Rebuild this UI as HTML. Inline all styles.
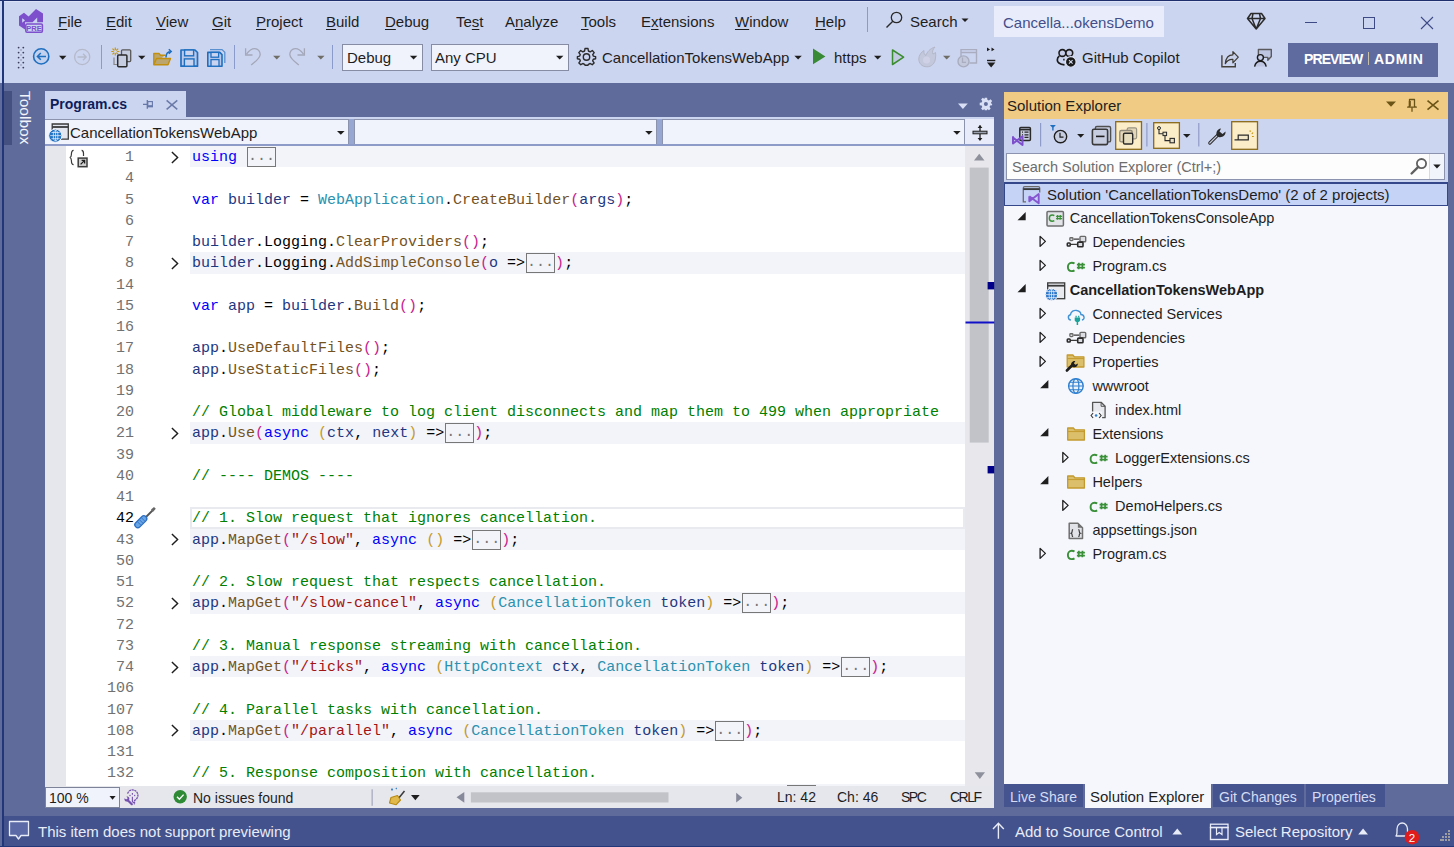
<!DOCTYPE html>
<html><head><meta charset="utf-8">
<style>
*{margin:0;padding:0;box-sizing:border-box}
html,body{width:1454px;height:847px;overflow:hidden;background:#5f6b9b}
body{position:relative;font-family:"Liberation Sans",sans-serif;color:#1e1e1e}
.a{position:absolute}
.t{position:absolute;white-space:pre;line-height:1;font-size:15px}
svg{position:absolute;overflow:visible}
.ul{text-decoration:underline;text-underline-offset:2px;text-decoration-thickness:1px}
#code{position:absolute;left:66px;top:146px;width:899px;height:640px;background:#fff;overflow:hidden}
.row{position:absolute;left:0;width:899px;height:21.25px}
.hl{position:absolute;left:124px;right:0;top:0;bottom:0;background:#f3f4f9}
.cur{position:absolute;left:124px;right:0;top:0;height:21.5px;border:2px solid #e9e9f0}
.ln{position:absolute;left:0;top:1px;width:68px;text-align:right;font-family:"Liberation Mono",monospace;font-size:15px;line-height:21.25px;color:#717171}
.ln.cl{color:#000}
.cd{position:absolute;left:126px;top:1px;font-family:"Liberation Mono",monospace;font-size:15px;line-height:21.25px;white-space:pre;color:#000}
.k{color:#0000ff}.v{color:#1f377f}.ty{color:#2b91af}.f{color:#74531f}.s{color:#a31515}.c{color:#008000}.p1{color:#c8228d}.p2{color:#c49a2c}
.bx{display:inline-block;margin-left:1px;width:29px;height:20px;border:1.5px solid #777;vertical-align:top;margin-top:0;color:#777;line-height:18px;text-indent:0;overflow:hidden;background:#f3f4f9}
.chev{left:105px;top:4.5px}

</style></head><body>
<!-- window header area -->
<div class="a" style="left:0;top:0;width:1454px;height:83px;background:#ccd5f0"></div>
<div class="a" style="left:0;top:0;width:1454px;height:1px;background:#1f2f6e"></div>
<div class="a" style="left:4px;top:1px;width:1450px;height:1px;background:#dbe2f7"></div>
<div class="a" style="left:2px;top:0;width:2px;height:847px;background:#22367a"></div>
<div class="a" style="left:0;top:846px;width:1454px;height:1px;background:#22367a"></div>

<!-- logo -->
<svg style="left:0;top:0" width="60" height="40">
<path d="M19 16.2 L24 12.7 L28.6 16.4 L36 9 L43 13.4 L43 22.2 L37.2 22.2 L37.2 17.6 L32.6 22.2 L25 22.2 L25 29.6 L19 25.6 Z" fill="#7d4fcd"/>
<path d="M22.2 18.3 L25 20.3 L22.2 22.8 Z" fill="#ccd5f0"/>
<rect x="25.8" y="23.9" width="16.6" height="8.4" rx="1.2" fill="#ccd5f0" stroke="#7d4fcd" stroke-width="1.5"/>
<text x="34.1" y="30.8" font-family="Liberation Sans" font-weight="bold" font-size="7.6" text-anchor="middle" fill="#7d4fcd">PRE</text>
</svg>
<!-- menu -->
<div class="t" style="left:58px;top:14px"><span class="ul">F</span>ile</div>
<div class="t" style="left:106px;top:14px"><span class="ul">E</span>dit</div>
<div class="t" style="left:156px;top:14px"><span class="ul">V</span>iew</div>
<div class="t" style="left:212px;top:14px"><span class="ul">G</span>it</div>
<div class="t" style="left:256px;top:14px"><span class="ul">P</span>roject</div>
<div class="t" style="left:326px;top:14px"><span class="ul">B</span>uild</div>
<div class="t" style="left:385px;top:14px"><span class="ul">D</span>ebug</div>
<div class="t" style="left:456px;top:14px">Te<span class="ul">s</span>t</div>
<div class="t" style="left:505px;top:14px">A<span class="ul">n</span>alyze</div>
<div class="t" style="left:581px;top:14px"><span class="ul">T</span>ools</div>
<div class="t" style="left:641px;top:14px">E<span class="ul">x</span>tensions</div>
<div class="t" style="left:735px;top:14px"><span class="ul">W</span>indow</div>
<div class="t" style="left:815px;top:14px"><span class="ul">H</span>elp</div>
<div class="a" style="left:867px;top:7px;width:1px;height:25px;background:#8e9ac4"></div>
<svg style="left:880px;top:8px" width="30" height="26"><circle cx="16.5" cy="9.5" r="5.2" fill="none" stroke="#2b2b2b" stroke-width="1.3"/><path d="M12.8 13.2 L6.5 19.5" stroke="#2b2b2b" stroke-width="1.4"/></svg>
<div class="t" style="left:910px;top:14px">Search</div>
<svg style="left:960px;top:17px" width="10" height="6"><path d="M1.5 1.5 L8.5 1.5 L5 5 Z" fill="#1e1e1e"/></svg>
<!-- title box -->
<div class="a" style="left:994px;top:6px;width:170px;height:31px;background:#e9edfb"></div>
<div class="t" style="left:1003px;top:15px;color:#434f8b">Cancella...okensDemo</div>
<!-- diamond -->
<svg style="left:1240px;top:8px" width="30" height="26"><path d="M11 5.5 L21.5 5.5 L25 10.5 L16.2 21 L7.5 10.5 Z M7.5 10.5 L25 10.5 M13 5.5 L12 10.5 L16.2 21 L20.5 10.5 L19.5 5.5" fill="none" stroke="#2b2b2b" stroke-width="1.5" stroke-linejoin="round"/></svg>
<!-- window controls -->
<div class="a" style="left:1305px;top:22px;width:12px;height:1px;background:#3e4a86"></div>
<div class="a" style="left:1363px;top:17px;width:12px;height:12px;border:1px solid #3e4a86"></div>
<svg style="left:1420px;top:16px" width="14" height="14"><path d="M1 1 L13 13 M13 1 L1 13" stroke="#3e4a86" stroke-width="1.1"/></svg>

<!-- toolbar grip -->
<svg style="left:0;top:0" width="30" height="80">
<g fill="#3b3f5e"><circle cx="18.6" cy="47.6" r="0.9"/><circle cx="23.3" cy="47.6" r="0.9"/><circle cx="18.6" cy="52.6" r="0.9"/><circle cx="23.3" cy="52.6" r="0.9"/><circle cx="18.6" cy="57.6" r="0.9"/><circle cx="23.3" cy="57.6" r="0.9"/><circle cx="18.6" cy="62.6" r="0.9"/><circle cx="23.3" cy="62.6" r="0.9"/><circle cx="18.6" cy="67.6" r="0.9"/><circle cx="23.3" cy="67.6" r="0.9"/></g>
<g fill="#8a90a8"><circle cx="21" cy="50" r="0.8"/><circle cx="21" cy="55" r="0.8"/><circle cx="21" cy="60" r="0.8"/><circle cx="21" cy="65" r="0.8"/></g>
</svg>
<!-- back / fwd -->
<svg style="left:0;top:0" width="100" height="80">
<circle cx="41.2" cy="56.4" r="7.6" fill="#c3d1ee" stroke="#1f6fc0" stroke-width="1.6"/>
<path d="M46 56.4 L37.6 56.4 M40.8 53 L37.4 56.4 L40.8 59.8" fill="none" stroke="#1f6fc0" stroke-width="1.5"/>
<path d="M59 55.8 L66.4 55.8 L62.7 59.8 Z" fill="#1e1e1e"/>
<circle cx="82.2" cy="57" r="7.6" fill="none" stroke="#b5bacb" stroke-width="1.3"/>
<path d="M77.5 57 L86 57 M83 53.8 L86.2 57 L83 60.2" fill="none" stroke="#b5bacb" stroke-width="1.3"/>
</svg>
<div class="a" style="left:101px;top:45px;width:1px;height:24px;background:#8a9acb"></div>
<!-- new project -->
<svg style="left:0;top:0" width="240" height="80">
<g stroke="#c8960c" stroke-width="1.2"><path d="M115.3 47.5 L115.3 55.5 M111.3 51.5 L119.3 51.5 M112.5 48.7 L118.1 54.3 M118.1 48.7 L112.5 54.3"/></g>
<circle cx="115.3" cy="51.5" r="1.6" fill="#ccd5f0"/>
<rect x="121.5" y="49.8" width="9.2" height="11.8" rx="1" fill="#c7cde0" stroke="#585858" stroke-width="1.3"/>
<rect x="117.7" y="55" width="9.2" height="11.8" rx="1" fill="#c7cde0" stroke="#2a2a2a" stroke-width="1.5"/>
<path d="M114 57.5 L114 64.5 L117 64.5" fill="none" stroke="#888" stroke-width="1.2"/>
<path d="M138.1 55.8 L145.4 55.8 L141.75 59.6 Z" fill="#1e1e1e"/>
<!-- folder -->
<path d="M153.8 64.8 L153.8 53.5 L159 53.5 L160.5 55.2 L165 55.2 M153.8 64.8 L156.5 58.5 L170.5 58.5 L168 64.8 Z" fill="#bda66e" stroke="#c28f0e" stroke-width="1.4" stroke-linejoin="round"/>
<path d="M166 57.5 C166 53 167.5 51.5 171 51.5 M168.8 49.3 L171.2 51.5 L168.8 53.8" fill="none" stroke="#1f6fc0" stroke-width="1.5"/>
<!-- save -->
<path d="M181 50 L195 50 L197.5 52.5 L197.5 66.2 L181 66.2 Z" fill="#b8c8ea" stroke="#1f6fc0" stroke-width="1.7" stroke-linejoin="round"/>
<rect x="184.6" y="50" width="9" height="5.8" fill="#ccd5f0" stroke="#1f6fc0" stroke-width="1.4"/>
<rect x="184.4" y="58.9" width="9.6" height="7.3" fill="#c9d5f0" stroke="#1f6fc0" stroke-width="1.4"/>
<!-- save all -->
<path d="M210 49.6 L222 49.6 L224.8 52.3 L224.8 63" fill="none" stroke="#5a8fd0" stroke-width="1.3"/>
<path d="M207.8 52.4 L219.8 52.4 L222 54.6 L222 66.2 L207.8 66.2 Z" fill="#b8c8ea" stroke="#1f6fc0" stroke-width="1.6" stroke-linejoin="round"/>
<rect x="211" y="52.4" width="7.6" height="4.8" fill="#ccd5f0" stroke="#1f6fc0" stroke-width="1.3"/>
<rect x="211" y="59.6" width="8" height="6.6" fill="#c9d5f0" stroke="#1f6fc0" stroke-width="1.3"/>
</svg>
<div class="a" style="left:234px;top:45px;width:1px;height:24px;background:#8a9acb"></div>
<!-- undo redo -->
<svg style="left:0;top:0" width="340" height="80">
<path d="M245.6 48.2 L245.6 55 L252.5 55" fill="none" stroke="#a3a7b8" stroke-width="1.3"/>
<path d="M246.5 54.2 C249 50.5 251.5 48.6 254.8 48.6 C258 48.6 260.2 51.5 260.2 54.5 C260.2 57.5 258 59.8 251.2 65" fill="none" stroke="#a3a7b8" stroke-width="1.3"/>
<path d="M273.1 55.8 L280.4 55.8 L276.75 59.5 Z" fill="#6e6e66"/>
<path d="M304.4 48.2 L304.4 55 L297.5 55" fill="none" stroke="#a3a7b8" stroke-width="1.3"/>
<path d="M303.5 54.2 C301 50.5 298.5 48.6 295.2 48.6 C292 48.6 289.8 51.5 289.8 54.5 C289.8 57.5 292 59.8 298.8 65" fill="none" stroke="#a3a7b8" stroke-width="1.3"/>
<path d="M317.2 55.8 L324.5 55.8 L320.85 59.5 Z" fill="#6e6e66"/>
</svg>
<div class="a" style="left:332px;top:45px;width:1px;height:24px;background:#8a9acb"></div>
<!-- combos -->
<div class="a" style="left:342px;top:44px;width:81px;height:27px;background:#f0f3fc;border:1px solid #868ca4"></div>
<div class="t" style="left:347px;top:50px">Debug</div>
<div class="a" style="left:431px;top:44px;width:138px;height:27px;background:#f0f3fc;border:1px solid #868ca4"></div>
<div class="t" style="left:435px;top:50px">Any CPU</div>
<svg style="left:0;top:0" width="600" height="80"><path d="M409.9 55.8 L417.3 55.8 L413.6 59.6 Z" fill="#1e1e1e"/><path d="M556 55.8 L563.4 55.8 L559.7 59.6 Z" fill="#1e1e1e"/></svg>
<!-- gear -->
<svg style="left:577px;top:48px" width="19" height="18" viewBox="0 0 19 18">
<path d="M8 0.8 L11 0.8 L11.4 3.3 L13.2 4.2 L15.3 2.8 L17.2 4.9 L15.7 6.9 L16.3 8.4 L18.6 8.9 L18.6 11.1 L16.3 11.6 L15.7 13.1 L17.1 15.2 L15.2 17 L13.2 15.8 L11.4 16.7 L11 17.6 L8 17.6 L7.6 16.7 L5.8 15.8 L3.8 17 L1.9 15.2 L3.3 13.1 L2.7 11.6 L0.4 11.1 L0.4 8.9 L2.7 8.4 L3.3 6.9 L1.8 4.9 L3.7 2.8 L5.8 4.2 L7.6 3.3 Z" fill="none" stroke="#2a2a2a" stroke-width="1.4" stroke-linejoin="round" transform="translate(0,-0.3)"/>
<circle cx="9.5" cy="9" r="3.2" fill="none" stroke="#2a2a2a" stroke-width="1.4"/>
</svg>
<div class="t" style="left:602px;top:50px">CancellationTokensWebApp</div>
<svg style="left:0;top:0" width="1000" height="80">
<path d="M794.4 55.8 L801.8 55.8 L798.1 59.6 Z" fill="#1e1e1e"/>
<path d="M813 48.6 L825.4 56.4 L813 64.2 Z" fill="#388a34"/>
<path d="M874 55.8 L881.4 55.8 L877.7 59.6 Z" fill="#1e1e1e"/>
<path d="M892.5 50 L903.6 57.2 L892.5 64.5 Z" fill="#c3cbe3" stroke="#3a8d2e" stroke-width="1.5" stroke-linejoin="round"/>
<!-- flame -->
<path d="M927 66.8 C921.5 66.8 918.8 63 918.8 59 C918.8 55 921.5 52 924 50.5 C923.5 53 924.5 55 926 55.5 C927 52 930 48.5 935 47 C932.5 49.5 932 52 933 54 C934 53.5 935 53 935.5 52.5 C935.8 54 935.8 56 935.5 58 C935 63.5 931.5 66.8 927 66.8 Z" fill="#c4c8dc" stroke="#b3b7c8" stroke-width="1"/>
<circle cx="926.5" cy="60" r="3.5" fill="#cfd2e6"/>
<path d="M943 55.8 L950.4 55.8 L946.7 59.6 Z" fill="#6e6e66"/>
<!-- window/clock -->
<path d="M961 62 L961 49.6 L976.5 49.6 L976.5 63 L969.5 63 M961 52.5 L976.5 52.5" fill="none" stroke="#a9adbf" stroke-width="1.4"/>
<circle cx="963.5" cy="61.4" r="5.5" fill="#c4c9dc" stroke="#a9adbf" stroke-width="1.4"/>
<path d="M962.5 57.5 L962.5 62.3 L966 62.3" fill="none" stroke="#a9adbf" stroke-width="1.3"/>
<!-- overflow -->
<path d="M987 47.6 L990 49.4 L987 51.2 Z M991.5 47.6 L994.5 49.4 L991.5 51.2 Z" fill="#1e1e1e"/>
<rect x="987" y="59.8" width="8.3" height="1.4" fill="#1e1e1e"/>
<path d="M987 62.6 L995.3 62.6 L991.15 67.6 Z" fill="#1e1e1e"/>
</svg>
<div class="t" style="left:834px;top:50px">https</div>
<!-- copilot -->
<svg style="left:0;top:0" width="1100" height="80">
<circle cx="1062.4" cy="53" r="3.4" fill="#c6cee9" stroke="#1a1a1a" stroke-width="1.6"/>
<circle cx="1069.3" cy="53" r="3.4" fill="#c6cee9" stroke="#1a1a1a" stroke-width="1.6"/>
<path d="M1059.4 56 C1057.8 57 1057.3 58.5 1057.3 60 C1057.3 62.5 1060 64.2 1064.5 64.8" fill="none" stroke="#1a1a1a" stroke-width="1.7"/>
<path d="M1063.9 58.8 L1063.9 60.5" stroke="#1a1a1a" stroke-width="1.4"/>
<circle cx="1070.8" cy="61.9" r="5.3" fill="#1a1a1a" stroke="#dfe5f8" stroke-width="1.1"/>
<path d="M1069 60.1 L1072.6 63.7 M1072.6 60.1 L1069 63.7" stroke="#d8def2" stroke-width="1.1"/>
</svg>
<div class="t" style="left:1082px;top:50px">GitHub Copilot</div>
<!-- share & feedback -->
<svg style="left:0;top:0" width="1290" height="80">
<path d="M1221.9 55.2 L1221.9 66.8 L1235.3 66.8 L1235.3 63.1" fill="none" stroke="#45423a" stroke-width="1.4"/>
<path d="M1225.3 63.6 C1225.8 58 1228.5 54.8 1232.9 54.8 L1232.9 51.6 L1238.3 57.2 L1232.9 62.8 L1232.9 59.4 C1229.5 59.2 1227 60.5 1225.3 63.6 Z" fill="#c9d0ea" stroke="#3d3a33" stroke-width="1.2" stroke-linejoin="round"/>
<path d="M1258.4 57.8 L1258.4 49.5 L1271.3 49.5 L1271.3 56.5 L1267.8 60.3 L1267.8 57.4 L1263 57.4" fill="#bec5e0" stroke="#5a5a5e" stroke-width="1.4" stroke-linejoin="round"/>
<circle cx="1260.4" cy="57.6" r="3" fill="#c6cee9" stroke="#1a1a1a" stroke-width="1.4"/>
<path d="M1254.6 66.6 C1255.3 63 1257.5 61.3 1260.4 61.3 C1263.3 61.3 1265.5 63 1266.2 66.6 Z" fill="#bec5e0"/>
<path d="M1254.6 66.6 C1255.3 63 1257.5 61.3 1260.4 61.3 C1263.3 61.3 1265.5 63 1266.2 66.6" fill="none" stroke="#1a1a1a" stroke-width="1.4"/>
</svg>
<!-- preview admin -->
<div class="a" style="left:1288px;top:43px;width:150px;height:34px;background:#5f6b9f"></div>
<div class="t" style="left:1304px;top:52px;font-size:14px;font-weight:bold;color:#fff;letter-spacing:-0.9px">PREVIEW</div>
<div class="a" style="left:1368px;top:52px;width:1px;height:13px;background:#c8bfa8"></div>
<div class="t" style="left:1374px;top:52px;font-size:14px;font-weight:bold;color:#fff;letter-spacing:0.75px">ADMIN</div>

<!-- status bar -->
<div class="a" style="left:4px;top:816px;width:1450px;height:30px;background:#43528c"></div>

<!-- editor panel -->
<div class="a" style="left:45px;top:91px;width:141px;height:27px;background:#ccd5f0"></div>
<div class="a" style="left:45px;top:117px;width:949px;height:29px;background:#ccd5f0"></div>
<div class="a" style="left:45px;top:146px;width:21px;height:640px;background:#e6e7ec"></div>
<div id="code">
<div class="row" style="top:0.00px"><div class="hl"></div><div class="ln">1</div><svg class="chev" width="8" height="13" viewBox="0 0 8 13"><path d="M0.9 0.9 L6.6 6.5 L0.9 12.1" fill="none" stroke="#1e1e1e" stroke-width="1.45"/></svg><div class="cd"><span class="k">using</span> <span class="bx">...</span></div></div>
<div class="row" style="top:21.25px"><div class="ln">4</div><div class="cd"></div></div>
<div class="row" style="top:42.50px"><div class="ln">5</div><div class="cd"><span class="k">var</span> <span class="v">builder</span> = <span class="ty">WebApplication</span>.<span class="f">CreateBuilder</span><span class="p1">(</span><span class="v">args</span><span class="p1">)</span>;</div></div>
<div class="row" style="top:63.75px"><div class="ln">6</div><div class="cd"></div></div>
<div class="row" style="top:85.00px"><div class="ln">7</div><div class="cd"><span class="v">builder</span>.Logging.<span class="f">ClearProviders</span><span class="p1">()</span>;</div></div>
<div class="row" style="top:106.25px"><div class="hl"></div><div class="ln">8</div><svg class="chev" width="8" height="13" viewBox="0 0 8 13"><path d="M0.9 0.9 L6.6 6.5 L0.9 12.1" fill="none" stroke="#1e1e1e" stroke-width="1.45"/></svg><div class="cd"><span class="v">builder</span>.Logging.<span class="f">AddSimpleConsole</span><span class="p1">(</span><span class="v">o</span> =&gt;<span class="bx">...</span><span class="p1">)</span>;</div></div>
<div class="row" style="top:127.50px"><div class="ln">14</div><div class="cd"></div></div>
<div class="row" style="top:148.75px"><div class="ln">15</div><div class="cd"><span class="k">var</span> <span class="v">app</span> = <span class="v">builder</span>.<span class="f">Build</span><span class="p1">()</span>;</div></div>
<div class="row" style="top:170.00px"><div class="ln">16</div><div class="cd"></div></div>
<div class="row" style="top:191.25px"><div class="ln">17</div><div class="cd"><span class="v">app</span>.<span class="f">UseDefaultFiles</span><span class="p1">()</span>;</div></div>
<div class="row" style="top:212.50px"><div class="ln">18</div><div class="cd"><span class="v">app</span>.<span class="f">UseStaticFiles</span><span class="p1">()</span>;</div></div>
<div class="row" style="top:233.75px"><div class="ln">19</div><div class="cd"></div></div>
<div class="row" style="top:255.00px"><div class="ln">20</div><div class="cd"><span class="c">// Global middleware to log client disconnects and map them to 499 when appropriate</span></div></div>
<div class="row" style="top:276.25px"><div class="hl"></div><div class="ln">21</div><svg class="chev" width="8" height="13" viewBox="0 0 8 13"><path d="M0.9 0.9 L6.6 6.5 L0.9 12.1" fill="none" stroke="#1e1e1e" stroke-width="1.45"/></svg><div class="cd"><span class="v">app</span>.<span class="f">Use</span><span class="p1">(</span><span class="k">async</span> <span class="p2">(</span><span class="v">ctx</span>, <span class="v">next</span><span class="p2">)</span> =&gt;<span class="bx">...</span><span class="p1">)</span>;</div></div>
<div class="row" style="top:297.50px"><div class="ln">39</div><div class="cd"></div></div>
<div class="row" style="top:318.75px"><div class="ln">40</div><div class="cd"><span class="c">// ---- DEMOS ----</span></div></div>
<div class="row" style="top:340.00px"><div class="ln">41</div><div class="cd"></div></div>
<div class="row" style="top:361.25px"><div class="cur"></div><div class="ln cl">42</div><div class="cd"><span class="c">// 1. Slow request that ignores cancellation.</span></div></div>
<div class="row" style="top:382.50px"><div class="hl"></div><div class="ln">43</div><svg class="chev" width="8" height="13" viewBox="0 0 8 13"><path d="M0.9 0.9 L6.6 6.5 L0.9 12.1" fill="none" stroke="#1e1e1e" stroke-width="1.45"/></svg><div class="cd"><span class="v">app</span>.<span class="f">MapGet</span><span class="p1">(</span><span class="s">"/slow"</span>, <span class="k">async</span> <span class="p2">()</span> =&gt;<span class="bx">...</span><span class="p1">)</span>;</div></div>
<div class="row" style="top:403.75px"><div class="ln">50</div><div class="cd"></div></div>
<div class="row" style="top:425.00px"><div class="ln">51</div><div class="cd"><span class="c">// 2. Slow request that respects cancellation.</span></div></div>
<div class="row" style="top:446.25px"><div class="hl"></div><div class="ln">52</div><svg class="chev" width="8" height="13" viewBox="0 0 8 13"><path d="M0.9 0.9 L6.6 6.5 L0.9 12.1" fill="none" stroke="#1e1e1e" stroke-width="1.45"/></svg><div class="cd"><span class="v">app</span>.<span class="f">MapGet</span><span class="p1">(</span><span class="s">"/slow-cancel"</span>, <span class="k">async</span> <span class="p2">(</span><span class="ty">CancellationToken</span> <span class="v">token</span><span class="p2">)</span> =&gt;<span class="bx">...</span><span class="p1">)</span>;</div></div>
<div class="row" style="top:467.50px"><div class="ln">72</div><div class="cd"></div></div>
<div class="row" style="top:488.75px"><div class="ln">73</div><div class="cd"><span class="c">// 3. Manual response streaming with cancellation.</span></div></div>
<div class="row" style="top:510.00px"><div class="hl"></div><div class="ln">74</div><svg class="chev" width="8" height="13" viewBox="0 0 8 13"><path d="M0.9 0.9 L6.6 6.5 L0.9 12.1" fill="none" stroke="#1e1e1e" stroke-width="1.45"/></svg><div class="cd"><span class="v">app</span>.<span class="f">MapGet</span><span class="p1">(</span><span class="s">"/ticks"</span>, <span class="k">async</span> <span class="p2">(</span><span class="ty">HttpContext</span> <span class="v">ctx</span>, <span class="ty">CancellationToken</span> <span class="v">token</span><span class="p2">)</span> =&gt;<span class="bx">...</span><span class="p1">)</span>;</div></div>
<div class="row" style="top:531.25px"><div class="ln">106</div><div class="cd"></div></div>
<div class="row" style="top:552.50px"><div class="ln">107</div><div class="cd"><span class="c">// 4. Parallel tasks with cancellation.</span></div></div>
<div class="row" style="top:573.75px"><div class="hl"></div><div class="ln">108</div><svg class="chev" width="8" height="13" viewBox="0 0 8 13"><path d="M0.9 0.9 L6.6 6.5 L0.9 12.1" fill="none" stroke="#1e1e1e" stroke-width="1.45"/></svg><div class="cd"><span class="v">app</span>.<span class="f">MapGet</span><span class="p1">(</span><span class="s">"/parallel"</span>, <span class="k">async</span> <span class="p2">(</span><span class="ty">CancellationToken</span> <span class="v">token</span><span class="p2">)</span> =&gt;<span class="bx">...</span><span class="p1">)</span>;</div></div>
<div class="row" style="top:595.00px"><div class="ln">131</div><div class="cd"></div></div>
<div class="row" style="top:616.25px"><div class="ln">132</div><div class="cd"><span class="c">// 5. Response composition with cancellation.</span></div></div>
<div class="row" style="top:637.50px"><div class="hl"></div><div class="ln">133</div><svg class="chev" width="8" height="13" viewBox="0 0 8 13"><path d="M0.9 0.9 L6.6 6.5 L0.9 12.1" fill="none" stroke="#1e1e1e" stroke-width="1.45"/></svg><div class="cd"><span class="v">app</span>.<span class="f">MapGet</span><span class="p1">(</span><span class="s">"/compose-response"</span>, <span class="k">async</span> <span class="p2">(</span><span class="ty">CancellationToken</span> <span class="v">token</span><span class="p2">)</span> =&gt;<span class="bx">...</span><span class="p1">)</span>;</div></div>
</div>
<div class="a" style="left:965px;top:146px;width:29px;height:640px;background:#e8e8ec"></div>
<div class="a" style="left:45px;top:786px;width:949px;height:22px;background:#e6e7ed"></div>

<!-- toolbox -->
<div class="a" style="left:4px;top:91px;width:8px;height:54px;background:#44507f"></div>
<div class="t" style="left:13px;top:91px;font-size:15.5px;color:#f2f4fa;transform-origin:0 0;transform:translate(19.5px,0) rotate(90deg)">Toolbox</div>
<!-- editor tab -->
<div class="t" style="left:50px;top:97px;font-size:14px;font-weight:bold;color:#0e1d5a">Program.cs</div>
<svg style="left:0;top:0" width="200" height="120">
<path d="M143 104.4 L147.3 104.4 M147.3 100.1 L147.3 108.7" stroke="#6577a8" stroke-width="1.3" fill="none"/>
<rect x="147.8" y="101.6" width="4.6" height="5.2" fill="none" stroke="#6577a8" stroke-width="1.1"/>
<rect x="147.8" y="105.2" width="4.6" height="1.8" fill="#6577a8"/>
<path d="M166.6 100.4 L177.3 109.4 M177.3 100.4 L166.6 109.4" stroke="#6a7aa8" stroke-width="1.5" fill="none"/>
</svg>
<!-- tab row right icons -->
<svg style="left:0;top:0" width="1000" height="120">
<path d="M958 103.6 L967.8 103.6 L962.9 108.9 Z" fill="#d9dff5"/>
<g transform="translate(985.9,104)"><path d="M-1.2 -6.2 L1.2 -6.2 L1.5 -4.2 L3 -3.5 L4.6 -4.7 L6.3 -3 L5.1 -1.4 L5.8 0.1 L6.2 -0 L6.2 1.2 L4.3 1.5 L3.6 3 L4.8 4.6 L3.1 6.3 L1.5 5.1 L1.2 6.2 L-1.2 6.2 L-1.5 5.1 L-3.1 6.3 L-4.8 4.6 L-3.6 3 L-4.3 1.5 L-6.2 1.2 L-6.2 -1.2 L-4.3 -1.5 L-3.6 -3 L-4.8 -4.6 L-3.1 -6.3 L-1.5 -5.1 Z" fill="#d9dff5"/><circle r="2" fill="#5f6b9b"/></g>
</svg>
<!-- nav bar combos -->
<div class="a" style="left:45px;top:119px;width:304px;height:26px;background:#f0f3fb;border:1px solid #8b93ad;border-left:0"></div>
<div class="a" style="left:349px;top:119px;width:5px;height:26px;background:#98a6d2"></div>
<div class="a" style="left:354px;top:119px;width:303px;height:26px;background:#f0f3fb;border:1px solid #8b93ad"></div>
<div class="a" style="left:657px;top:119px;width:5px;height:26px;background:#98a6d2"></div>
<div class="a" style="left:662px;top:119px;width:303px;height:26px;background:#f0f3fb;border:1px solid #8b93ad"></div>
<div class="a" style="left:965px;top:119px;width:29px;height:26px;background:#e8ecfa"></div>
<div class="a" style="left:45px;top:144px;width:949px;height:2px;background:#8d9bc8"></div>
<svg style="left:0;top:0" width="1000" height="150">
<path d="M337 131 L344.6 131 L340.8 134.8 Z" fill="#1e1e1e"/>
<path d="M645.2 131 L652.6 131 L648.9 134.8 Z" fill="#1e1e1e"/>
<path d="M953.2 131 L960.6 131 L956.9 134.8 Z" fill="#1e1e1e"/>
<!-- split icon -->
<rect x="973" y="131.2" width="14" height="2.6" fill="#9aa0ad" stroke="#1e1e1e" stroke-width="1"/>
<path d="M980 125.5 L980 131 M980 134 L980 140" stroke="#1e1e1e" stroke-width="1.3"/>
<path d="M977.6 128 L980 125 L982.4 128 Z M977.6 138 L980 141 L982.4 138 Z" fill="#1e1e1e"/>
<!-- web project icon -->
<path d="M52.2 139.2 L52.2 124 L68.3 124 L68.3 139.2 Z" fill="#e3e6ee" stroke="#3a3a3a" stroke-width="1.3"/>
<path d="M52.2 127 L68.3 127" stroke="#3a3a3a" stroke-width="1.8"/>
<circle cx="55.3" cy="135.7" r="6.6" fill="#1f72c4" stroke="#f0f3fb" stroke-width="1"/>
<path d="M50.2 135.6 L61 135.6 M55.6 130 L55.6 141 M51.5 132.5 L59.7 132.5 M51.5 138.7 L59.7 138.7" stroke="#dce8f8" stroke-width="0.8"/>
<ellipse cx="55.6" cy="135.6" rx="2.3" ry="5.2" fill="none" stroke="#dce8f8" stroke-width="0.8"/>
</svg>
<div class="t" style="left:70px;top:125px">CancellationTokensWebApp</div>
<!-- margin icon -->
<svg style="left:0;top:0" width="100" height="175">
<path d="M73.6 150.4 C71.5 150.4 71.4 152 71.4 154.5 C71.4 156.3 71 157.2 69.8 157.5 C71 157.8 71.4 158.7 71.4 160.5 C71.4 163 71.5 164.6 73.6 164.6" fill="none" stroke="#3a3a3a" stroke-width="1.2"/>
<path d="M81.6 150.4 C83.4 150.4 83.5 151.6 83.5 153.5 L83.5 156" fill="none" stroke="#3a3a3a" stroke-width="1.2"/>
<rect x="78.2" y="158.1" width="8.8" height="8.6" fill="#cfcfcf" stroke="#3c3c3c" stroke-width="1.5"/>
<path d="M80.6 164.4 L84.6 160.4 M81.6 160.4 L84.6 160.4 L84.6 163.4" fill="none" stroke="#1e1e1e" stroke-width="1.3"/>
</svg>
<!-- scrollbar -->
<svg style="left:0;top:0" width="1000" height="800">
<path d="M974 160.4 L984.5 160.4 L979.25 153.8 Z" fill="#8e909c"/>
<rect x="969.7" y="167.6" width="19" height="275" fill="#c2c3c9"/>
<rect x="987.6" y="282" width="6.6" height="7.4" fill="#000088"/>
<rect x="987.6" y="466" width="6.6" height="7.4" fill="#000088"/>
<rect x="965.5" y="321.5" width="28.8" height="2" fill="#1010c8"/>
<path d="M974.7 772.2 L985 772.2 L979.85 778.9 Z" fill="#8e909c"/>
</svg>
<!-- screwdriver -->
<svg style="left:0;top:0" width="200" height="540">
<path d="M145.5 517.5 L152.5 510.5" stroke="#555" stroke-width="1.8"/>
<path d="M151 509.5 L154 507 L155.8 508.8 L153.2 511.8 Z" fill="#666"/>
<path d="M137.8 524.8 L143.8 518.8" stroke="#2c6fc4" stroke-width="7.2" stroke-linecap="round"/>
<path d="M137.8 524.8 L143.8 518.8" stroke="#6aa6e6" stroke-width="4.6" stroke-linecap="round"/>
<path d="M137.5 521.8 L140.8 525.1 M139.5 519.8 L142.8 523.1 M141.5 517.8 L144.8 521.1" stroke="#2c6fc4" stroke-width="0.9"/>
</svg>
<!-- editor status bar -->
<div class="a" style="left:45px;top:787px;width:75px;height:21px;background:#f0f3fb;border:1px solid #7d8499"></div>
<div class="t" style="left:49px;top:791px;font-size:14px">100 %</div>
<svg style="left:0;top:0" width="1000" height="815">
<path d="M109.5 796 L115.6 796 L112.55 799.8 Z" fill="#1e1e1e"/>

<!-- intellicode -->
<rect x="121.4" y="788.3" width="21.3" height="18.2" fill="#e6e6eb"/>
<path d="M127.6 793.6 C128.5 791 130.3 789.9 132.4 789.9 C135.5 789.9 137.9 792.3 137.9 795.4 C137.9 797.5 136.5 799.3 134.6 800.4 L134.4 804.7" fill="none" stroke="#7550b0" stroke-width="1.3" stroke-dasharray="2.2 0.6"/>
<path d="M132.4 793 L132.4 794.8 M132.4 796.8 L132.4 801.6 L134.4 803" fill="none" stroke="#7550b0" stroke-width="1.1"/>
<circle cx="130" cy="795.5" r="0.7" fill="#7550b0"/><circle cx="134.7" cy="795.5" r="0.7" fill="#7550b0"/>
<path d="M127.5 800 L131.8 804.2" stroke="#7550b0" stroke-width="2.2" stroke-linecap="round"/>
<path d="M128.6 801 C126.5 802.5 124 801 124.4 798.2 L126.3 799.6 L127.8 798.2 L126.4 796.6 C129 796 130.3 798.6 128.6 801 Z" fill="#7550b0"/>
<circle cx="180.2" cy="796.7" r="6.7" fill="#2f8a35"/>
<path d="M177 796.8 L179.4 799.2 L183.6 794.6" fill="none" stroke="#fff" stroke-width="1.4"/>
<rect x="371.5" y="789.3" width="1.3" height="16.5" fill="#a8abbd"/>
<!-- brush -->
<path d="M398 799 L404.5 791" stroke="#3a3a3a" stroke-width="1.6"/>
<path d="M391 797.5 L397.5 795.5 L400.5 800 L396 804.8 L389.5 803 Z" fill="#e1b94a" stroke="#b88a12" stroke-width="1.1" stroke-linejoin="round"/>
<path d="M391 789.5 L392 788 L393 789.5 L392 791 Z M395.5 788.5 L396.3 787.5 L397 788.5 L396.3 789.5 Z" fill="#1f6fc0"/>
<path d="M411 794.9 L419.7 794.9 L415.35 800.2 Z" fill="#1e1e1e"/>
<path d="M464.3 792 L464.3 802.7 L456.5 797.35 Z" fill="#868999"/>
<rect x="470.9" y="792.3" width="197.6" height="10.2" fill="#c2c3c9"/>
<path d="M736.2 792.8 L736.2 802.5 L742.3 797.65 Z" fill="#868999"/>
</svg>
<div class="t" style="left:193px;top:791px;font-size:14px">No issues found</div>
<div class="t" style="left:777px;top:790px;font-size:14px">Ln: 42</div>
<div class="t" style="left:837px;top:790px;font-size:14px">Ch: 46</div>
<div class="t" style="left:901px;top:790px;font-size:14px;letter-spacing:-1.5px">SPC</div>
<div class="t" style="left:950px;top:790px;font-size:14px;letter-spacing:-1.5px">CRLF</div>

<!-- solution explorer -->
<div class="a" style="left:1004px;top:92px;width:444px;height:27px;background:#f0cb84"></div>
<div class="a" style="left:1004px;top:119px;width:444px;height:64px;background:#ccd5f0"></div>
<div class="a" style="left:1004px;top:183px;width:444px;height:601px;background:#f6f7fc"></div>
<!-- SE header -->
<div class="t" style="left:1007px;top:98px;color:#1e1e1e">Solution Explorer</div>
<svg style="left:0;top:0" width="1454" height="200">
<path d="M1386 101.6 L1396 101.6 L1391 106.8 Z" fill="#6b5418"/>
<path d="M1409.5 99.5 L1414.5 99.5 L1414.5 106.5 L1416.3 107.2 L1407.7 107.2 L1409.5 106.5 Z" fill="none" stroke="#6b5418" stroke-width="1.3" stroke-linejoin="round"/>
<path d="M1409.8 101 L1409.8 106.5" stroke="#6b5418" stroke-width="2"/>
<path d="M1412 107.2 L1412 111.8" stroke="#6b5418" stroke-width="1.3"/>
<path d="M1427.5 100.6 L1438.5 109.6 M1438.5 100.6 L1427.5 109.6" stroke="#6b5418" stroke-width="1.6"/>
<!-- toolbar icons -->
<rect x="1019.8" y="127.4" width="10.6" height="13" rx="1" fill="#c7cde0" stroke="#2a2a2a" stroke-width="1.5"/>
<path d="M1019.8 129.6 L1030.4 129.6" stroke="#2a2a2a" stroke-width="1.6"/>
<path d="M1022 132.2 L1023 132.2 M1024.5 132.2 L1028.5 132.2 M1022 134.8 L1023 134.8 M1024.5 134.8 L1028.5 134.8 M1024.5 137.4 L1028.5 137.4" stroke="#2a2a2a" stroke-width="1.2"/>
<path d="M1013 137 L1013 143.5 L1022.5 136.2 L1022.5 145 L1013 137.6 Z" fill="none" stroke="#7d4fcd" stroke-width="2" stroke-linejoin="round"/>
<rect x="1040" y="123" width="1.2" height="23.5" fill="#8e9bc8"/>
<path d="M1049.9 125.1 L1055.9 125.1 L1053.6 127.6 L1053.6 130.6 L1052.2 130.6 L1052.2 127.6 Z" fill="#1f6fc0"/>
<circle cx="1060.5" cy="136.6" r="6.2" fill="#c7cde0" stroke="#1e1e1e" stroke-width="1.4"/>
<path d="M1060 132.8 L1060 137.2 L1063.5 137.2" fill="none" stroke="#1e1e1e" stroke-width="1.2"/>
<path d="M1077.1 134 L1084.3 134 L1080.7 137.8 Z" fill="#1e1e1e"/>
<rect x="1095.4" y="126.5" width="15.2" height="15.4" rx="1.5" fill="#c7cde0" stroke="#505050" stroke-width="1.4"/>
<rect x="1092.4" y="129.2" width="15.2" height="15.4" rx="1.5" fill="#c7cde0" stroke="#3a3a3a" stroke-width="1.6"/>
<path d="M1096 136.4 L1104.5 136.4" stroke="#1e1e1e" stroke-width="1.6"/>
<!-- toggle1 -->
<rect x="1115.7" y="121.7" width="25.8" height="27.6" fill="#fcedc9" stroke="#8a6a1a" stroke-width="1.3"/>
<rect x="1127.2" y="127.8" width="9.4" height="11" rx="1.5" fill="#e3d7b8" stroke="#9a9482" stroke-width="1.2"/>
<rect x="1119.8" y="130.5" width="12.4" height="11.4" rx="1.5" fill="#e3d7b8" stroke="#8e887a" stroke-width="1.3"/>
<rect x="1123.5" y="133.2" width="9.2" height="10.8" rx="1.3" fill="#e6dcbe" stroke="#2a2a2a" stroke-width="1.4"/>
<rect x="1146.3" y="123" width="1.2" height="23.5" fill="#8e9bc8"/>
<!-- toggle2 -->
<rect x="1153.7" y="122.7" width="25.7" height="25.6" fill="#fcedc9" stroke="#8a6a1a" stroke-width="1.3"/>
<path d="M1159 129.5 L1159 133.8 L1163 133.8 M1165 135.5 L1165 140.6 L1170 140.6" fill="none" stroke="#2a2a2a" stroke-width="1.1"/>
<circle cx="1159" cy="128.1" r="1.5" fill="#e8e0c4" stroke="#2a2a2a" stroke-width="1"/>
<rect x="1163" y="132.2" width="3.6" height="3.4" fill="#e8e0c4" stroke="#2a2a2a" stroke-width="1"/>
<rect x="1170" y="138.4" width="4.4" height="4.4" fill="#e8e0c4" stroke="#2a2a2a" stroke-width="1.1"/>
<path d="M1183 134 L1190.5 134 L1186.75 137.7 Z" fill="#1e1e1e"/>
<rect x="1198.2" y="123" width="1.2" height="23.5" fill="#8e9bc8"/>
<!-- wrench -->
<path d="M1209.8 143 L1217.5 135.3" stroke="#2a2a2a" stroke-width="3.2" stroke-linecap="round"/>
<path d="M1209.8 143 L1217.5 135.3" stroke="#c7cde0" stroke-width="1.2" stroke-linecap="round"/>
<path d="M1217 136 C1215.5 133 1217 129 1221 128.5 L1219.5 131.5 L1222.5 134 L1225.5 131.5 C1226 135 1222.5 138 1218.5 137 Z" fill="#2a2a2a"/>
<!-- toggle3 -->
<rect x="1231.7" y="121.7" width="25.8" height="27.6" fill="#fcedc9" stroke="#8a6a1a" stroke-width="1.3"/>
<path d="M1234.5 139.8 L1238.2 139.8 L1238.2 135.2 L1248.3 135.2 L1248.3 139.8 L1238.2 139.8" fill="#f2e7c8" stroke="#2a2a2a" stroke-width="1.2"/>
<path d="M1250 130.3 L1250.3 131.8 M1253 132.5 L1251.8 134 M1253.8 136.5 L1252 136.5" stroke="#c9960e" stroke-width="1.2"/>
</svg>
<!-- search box -->
<div class="a" style="left:1006px;top:153px;width:439px;height:27px;background:#fdfdfe;border:1px solid #8c93ae"></div>
<div class="a" style="left:1429px;top:154px;width:15px;height:25px;background:#f2f4fb;border-left:1px solid #d6dae8"></div>
<div class="t" style="left:1012px;top:160px;font-size:14.5px;color:#6d6d6d">Search Solution Explorer (Ctrl+;)</div>
<svg style="left:0;top:0" width="1454" height="200">
<circle cx="1421.5" cy="163.6" r="4.6" fill="none" stroke="#5f5f5f" stroke-width="1.8"/>
<path d="M1418.3 166.8 L1411.6 173.5" stroke="#5f5f5f" stroke-width="2.4" stroke-linecap="round"/>
<path d="M1433.2 164.5 L1440.7 164.5 L1436.95 168.5 Z" fill="#1e1e1e"/>
</svg>
<!-- selected row -->
<div class="a" style="left:1004px;top:182px;width:444px;height:24px;background:#c5d3f7;border:1px solid #34478a;border-top-width:2px"></div>
<svg style="left:0;top:0" width="1454" height="600"><path d="M1026.0 201.8 L1023.3 201.8 L1023.3 188.0 C1023.3 187.1 1024.0 186.7 1024.8 186.7 L1038.2 186.7 C1039.0 186.7 1039.7 187.1 1039.7 188.0 L1039.7 192.5" fill="none" stroke="#6a6a6a" stroke-width="1.3"/><path d="M1023.3 189.1 L1039.7 189.1" stroke="#3a3a3a" stroke-width="1.9"/><path d="M1029.3 196.3 L1029.3 201.3 L1038.7 194.1 L1038.7 203.3 L1029.3 196.3" fill="none" stroke="#8656d0" stroke-width="1.9" stroke-linejoin="round"/><path d="M1025.7 212 L1025.7 220.2 L1017.5 220.2 Z" fill="#1e1e1e"/><rect x="1047.0" y="211.60000000000002" width="16.4" height="14.4" rx="1" fill="#e2e4e8" stroke="#6e6e6e" stroke-width="1.5"/><path d="M1054.3000000000002 215.6 C1053.7 215.15 1052.95 215.0 1052.2 215.0 C1050.4 215.0 1049.3500000000001 216.5 1049.3500000000001 218.15 C1049.3500000000001 219.95000000000002 1050.4 221.225 1052.2 221.225 C1052.95 221.225 1053.7 221.07500000000002 1054.3000000000002 220.70000000000002" fill="none" stroke="#3a9038" stroke-width="1.4249999999999998"/><path d="M1057.6000000000001 215.0 L1057.45 219.8 M1060.3000000000002 215.0 L1060.15 219.8 M1056.1000000000001 216.35 L1062.1000000000001 216.35 M1056.1000000000001 218.6 L1062.1000000000001 218.6" stroke="#3a9038" stroke-width="1.275"/><path d="M1040.1000000000001 236.39999999999998 L1045.4 241.39999999999998 L1040.1000000000001 246.39999999999998 Z" fill="none" stroke="#1e1e1e" stroke-width="1.3" stroke-linejoin="round"/><path d="M1073.6000000000001 239.2 L1079.3000000000002 239.2 M1071.0 244.4 L1076.9 244.4" stroke="#3a3a3a" stroke-width="1.2"/><rect x="1069.85" y="237.75" width="3.10" height="2.90" rx="0.8" fill="#dcdde3" stroke="#6a6a6a" stroke-width="1.3"/><rect x="1080.00" y="236.40" width="5.70" height="5.40" rx="0.8" fill="#dcdde3" stroke="#6a6a6a" stroke-width="1.4"/><rect x="1067.25" y="242.95" width="3.00" height="3.00" rx="0.8" fill="#dcdde3" stroke="#2a2a2a" stroke-width="1.5"/><rect x="1077.70" y="242.10" width="5.30" height="4.70" rx="0.8" fill="#dcdde3" stroke="#2a2a2a" stroke-width="1.6"/><path d="M1040.1000000000001 260.4 L1045.4 265.4 L1040.1000000000001 270.4 Z" fill="none" stroke="#1e1e1e" stroke-width="1.3" stroke-linejoin="round"/><path d="M1074.5 263.6 C1073.7 263.0 1072.7 262.8 1071.7 262.8 C1069.3000000000002 262.8 1067.9 264.8 1067.9 267.0 C1067.9 269.4 1069.3000000000002 271.1 1071.7 271.1 C1072.7 271.1 1073.7 270.9 1074.5 270.4" fill="none" stroke="#3a9038" stroke-width="1.9"/><path d="M1078.9 262.8 L1078.7 269.2 M1082.5 262.8 L1082.3000000000002 269.2 M1076.9 264.6 L1084.9 264.6 M1076.9 267.6 L1084.9 267.6" stroke="#3a9038" stroke-width="1.7"/><path d="M1025.7 284 L1025.7 292.2 L1017.5 292.2 Z" fill="#1e1e1e"/><rect x="1047.7" y="282.90000000000003" width="17" height="15.8" fill="#e8eaf0" stroke="#3a3a3a" stroke-width="1.3"/><path d="M1047.7 285.7 L1064.7 285.7" stroke="#3a3a3a" stroke-width="1.8"/><circle cx="1051.5" cy="294.6" r="6.2" fill="#2a75c8" stroke="#f6f7fc" stroke-width="1"/><path d="M1045.8 294.6 L1057.2 294.6 M1051.5 288.90000000000003 L1051.5 300.3 M1047.0 291.6 L1056.0 291.6 M1047.0 297.6 L1056.0 297.6" stroke="#dce8f8" stroke-width="0.8"/><ellipse cx="1051.5" cy="294.6" rx="2.4" ry="5.6" fill="none" stroke="#dce8f8" stroke-width="0.8"/><path d="M1040.1000000000001 308.4 L1045.4 313.4 L1040.1000000000001 318.4 Z" fill="none" stroke="#1e1e1e" stroke-width="1.3" stroke-linejoin="round"/><path d="M1070.9 320 C1067.9 320 1067.4 315.5 1070.4 314.8 C1070.9 311.5 1073.9 309.8 1076.9 310.5 C1079.4 311 1080.9 313 1080.9 314.5 C1084.4 314.5 1085.4 319.5 1081.9 320" fill="none" stroke="#3f92d6" stroke-width="1.4"/><path d="M1076.1000000000001 315.8 L1076.1000000000001 317.5 M1078.7 315.8 L1078.7 317.5" stroke="#1aa39a" stroke-width="1.2"/><path d="M1074.7 317.5 L1080.1000000000001 317.5 L1080.1000000000001 320 C1080.1000000000001 321.5 1078.9 322 1077.4 322 C1075.9 322 1074.7 321.5 1074.7 320 Z" fill="#1aa39a"/><path d="M1077.4 322 L1077.4 325" stroke="#1aa39a" stroke-width="1.5"/><path d="M1040.1000000000001 332.4 L1045.4 337.4 L1040.1000000000001 342.4 Z" fill="none" stroke="#1e1e1e" stroke-width="1.3" stroke-linejoin="round"/><path d="M1073.6000000000001 335.2 L1079.3000000000002 335.2 M1071.0 340.4 L1076.9 340.4" stroke="#3a3a3a" stroke-width="1.2"/><rect x="1069.85" y="333.75" width="3.10" height="2.90" rx="0.8" fill="#dcdde3" stroke="#6a6a6a" stroke-width="1.3"/><rect x="1080.00" y="332.40" width="5.70" height="5.40" rx="0.8" fill="#dcdde3" stroke="#6a6a6a" stroke-width="1.4"/><rect x="1067.25" y="338.95" width="3.00" height="3.00" rx="0.8" fill="#dcdde3" stroke="#2a2a2a" stroke-width="1.5"/><rect x="1077.70" y="338.10" width="5.30" height="4.70" rx="0.8" fill="#dcdde3" stroke="#2a2a2a" stroke-width="1.6"/><path d="M1040.1000000000001 356.4 L1045.4 361.4 L1040.1000000000001 366.4 Z" fill="none" stroke="#1e1e1e" stroke-width="1.3" stroke-linejoin="round"/><path d="M1067.2 367 L1067.2 355 L1072.9 355 L1074.4 356.8 L1083.9 356.8 L1083.9 367 Z" fill="#dcbf6a" stroke="#c39a2e" stroke-width="1.3" stroke-linejoin="round"/><path d="M1067.2 358.6 L1083.9 358.6" stroke="#c39a2e" stroke-width="1"/><path d="M1066.9 370.5 L1072.4 365" stroke="#1e1e1e" stroke-width="2.6" stroke-linecap="round"/><path d="M1071.4 366 C1070.4 363 1072.4 360.5 1075.4 361 L1073.9 363.3 L1075.4 364.8 L1077.9 363.5 C1077.9 366.5 1075.4 368 1072.9 367 Z" fill="#1e1e1e"/><path d="M1048.4 380 L1048.4 388.2 L1040.2 388.2 Z" fill="#1e1e1e"/><circle cx="1075.9" cy="386.0" r="7.3" fill="#eef3fb" stroke="#2f80d0" stroke-width="1.4"/><ellipse cx="1075.9" cy="386.0" rx="3" ry="7.3" fill="none" stroke="#2f80d0" stroke-width="1.2"/><path d="M1068.6000000000001 386.0 L1083.2 386.0 M1069.7 382.3 L1082.1000000000001 382.3 M1069.7 389.7 L1082.1000000000001 389.7" stroke="#2f80d0" stroke-width="1.1"/><path d="M1092.6 402.3 L1101.1 402.3 L1105.1 406.3 L1105.1 417.7 L1092.6 417.7 Z" fill="#e8e9ee" stroke="#555" stroke-width="1.3" stroke-linejoin="round"/><path d="M1101.1 402.3 L1101.1 406.3 L1105.1 406.3" fill="none" stroke="#555" stroke-width="1"/><rect x="1090.1" y="411.5" width="12" height="7.5" fill="#f6f7fc"/><path d="M1093.1 413.0 L1091.1 415.5 L1093.1 418.0 M1099.1 413.0 L1101.1 415.5 L1099.1 418.0" fill="none" stroke="#333" stroke-width="1.1"/><circle cx="1096.1" cy="415.5" r="1.3" fill="#2f80d0"/><path d="M1048.4 428 L1048.4 436.2 L1040.2 436.2 Z" fill="#1e1e1e"/><path d="M1067.7 440 L1067.7 428 L1073.4 428 L1074.9 429.8 L1084.4 429.8 L1084.4 440 Z" fill="#dcbf6a" stroke="#c39a2e" stroke-width="1.3" stroke-linejoin="round"/><path d="M1067.7 431.6 L1084.4 431.6" stroke="#c39a2e" stroke-width="1"/><path d="M1062.8 452.4 L1068.1 457.4 L1062.8 462.4 Z" fill="none" stroke="#1e1e1e" stroke-width="1.3" stroke-linejoin="round"/><path d="M1097.1999999999998 455.6 C1096.3999999999999 455.0 1095.3999999999999 454.8 1094.3999999999999 454.8 C1092.0 454.8 1090.6 456.8 1090.6 459.0 C1090.6 461.4 1092.0 463.1 1094.3999999999999 463.1 C1095.3999999999999 463.1 1096.3999999999999 462.9 1097.1999999999998 462.4" fill="none" stroke="#3a9038" stroke-width="1.9"/><path d="M1101.6 454.8 L1101.3999999999999 461.2 M1105.1999999999998 454.8 L1105.0 461.2 M1099.6 456.6 L1107.6 456.6 M1099.6 459.6 L1107.6 459.6" stroke="#3a9038" stroke-width="1.7"/><path d="M1048.4 476 L1048.4 484.2 L1040.2 484.2 Z" fill="#1e1e1e"/><path d="M1067.7 488 L1067.7 476 L1073.4 476 L1074.9 477.8 L1084.4 477.8 L1084.4 488 Z" fill="#dcbf6a" stroke="#c39a2e" stroke-width="1.3" stroke-linejoin="round"/><path d="M1067.7 479.6 L1084.4 479.6" stroke="#c39a2e" stroke-width="1"/><path d="M1062.8 500.4 L1068.1 505.4 L1062.8 510.4 Z" fill="none" stroke="#1e1e1e" stroke-width="1.3" stroke-linejoin="round"/><path d="M1097.1999999999998 503.6 C1096.3999999999999 503.0 1095.3999999999999 502.8 1094.3999999999999 502.8 C1092.0 502.8 1090.6 504.8 1090.6 507.0 C1090.6 509.4 1092.0 511.1 1094.3999999999999 511.1 C1095.3999999999999 511.1 1096.3999999999999 510.9 1097.1999999999998 510.4" fill="none" stroke="#3a9038" stroke-width="1.9"/><path d="M1101.6 502.8 L1101.3999999999999 509.2 M1105.1999999999998 502.8 L1105.0 509.2 M1099.6 504.6 L1107.6 504.6 M1099.6 507.6 L1107.6 507.6" stroke="#3a9038" stroke-width="1.7"/><path d="M1069.2 523.3 L1077.9 523.3 L1082.5 527.7 L1082.5 538.5 L1069.2 538.5 Z" fill="#e2e3e8" stroke="#707070" stroke-width="1.5" stroke-linejoin="round"/><path d="M1077.9 523.3 L1077.9 527.7 L1082.5 527.7 Z" fill="#707070"/><path d="M1073.1000000000001 529.7 C1072.1000000000001 529.7 1072.1000000000001 530.5 1072.1000000000001 531.5 C1072.1000000000001 532.5 1071.7 533.0 1071.1000000000001 533.2 C1071.7 533.4 1072.1000000000001 533.9 1072.1000000000001 534.9 C1072.1000000000001 535.9 1072.1000000000001 536.7 1073.1000000000001 536.7" fill="none" stroke="#3a3a3a" stroke-width="1.2"/><path d="M1078.3000000000002 529.7 C1079.3000000000002 529.7 1079.3000000000002 530.5 1079.3000000000002 531.5 C1079.3000000000002 532.5 1079.7 533.0 1080.3000000000002 533.2 C1079.7 533.4 1079.3000000000002 533.9 1079.3000000000002 534.9 C1079.3000000000002 535.9 1079.3000000000002 536.7 1078.3000000000002 536.7" fill="none" stroke="#3a3a3a" stroke-width="1.2"/><path d="M1040.1000000000001 548.4000000000001 L1045.4 553.4000000000001 L1040.1000000000001 558.4000000000001 Z" fill="none" stroke="#1e1e1e" stroke-width="1.3" stroke-linejoin="round"/><path d="M1074.5 551.6 C1073.7 551.0 1072.7 550.8 1071.7 550.8 C1069.3000000000002 550.8 1067.9 552.8 1067.9 555.0 C1067.9 557.4 1069.3000000000002 559.1 1071.7 559.1 C1072.7 559.1 1073.7 558.9 1074.5 558.4" fill="none" stroke="#3a9038" stroke-width="1.9"/><path d="M1078.9 550.8 L1078.7 557.2 M1082.5 550.8 L1082.3000000000002 557.2 M1076.9 552.6 L1084.9 552.6 M1076.9 555.6 L1084.9 555.6" stroke="#3a9038" stroke-width="1.7"/></svg>
<div class="t" style="left:1047.0px;top:187px;font-size:15px;">Solution 'CancellationTokensDemo' (2 of 2 projects)</div>
<div class="t" style="left:1069.7px;top:211px;font-size:14.5px;">CancellationTokensConsoleApp</div>
<div class="t" style="left:1092.4px;top:235px;font-size:14.5px;">Dependencies</div>
<div class="t" style="left:1092.4px;top:259px;font-size:14.5px;">Program.cs</div>
<div class="t" style="left:1069.7px;top:283px;font-size:14.5px;font-weight:bold;">CancellationTokensWebApp</div>
<div class="t" style="left:1092.4px;top:307px;font-size:14.5px;">Connected Services</div>
<div class="t" style="left:1092.4px;top:331px;font-size:14.5px;">Dependencies</div>
<div class="t" style="left:1092.4px;top:355px;font-size:14.5px;">Properties</div>
<div class="t" style="left:1092.4px;top:379px;font-size:14.5px;">wwwroot</div>
<div class="t" style="left:1115.1px;top:403px;font-size:14.5px;">index.html</div>
<div class="t" style="left:1092.4px;top:427px;font-size:14.5px;">Extensions</div>
<div class="t" style="left:1115.1px;top:451px;font-size:14.5px;">LoggerExtensions.cs</div>
<div class="t" style="left:1092.4px;top:475px;font-size:14.5px;">Helpers</div>
<div class="t" style="left:1115.1px;top:499px;font-size:14.5px;">DemoHelpers.cs</div>
<div class="t" style="left:1092.4px;top:523px;font-size:14.5px;">appsettings.json</div>
<div class="t" style="left:1092.4px;top:547px;font-size:14.5px;">Program.cs</div>
<!-- bottom tabs -->
<div class="a" style="left:1004px;top:784px;width:79px;height:23px;background:#45548f"></div>
<div class="t" style="left:1010px;top:790px;font-size:14px;color:#d5dcf5">Live Share</div>
<div class="a" style="left:1085px;top:783px;width:126px;height:25px;background:#f6f7fc"></div>
<div class="t" style="left:1090px;top:789px;font-size:15px;color:#1e1e1e">Solution Explorer</div>
<div class="a" style="left:1213px;top:784px;width:91px;height:23px;background:#45548f"></div>
<div class="t" style="left:1219px;top:790px;font-size:14px;color:#d5dcf5">Git Changes</div>
<div class="a" style="left:1306px;top:784px;width:79px;height:23px;background:#45548f"></div>
<div class="t" style="left:1312px;top:790px;font-size:14px;color:#d5dcf5">Properties</div>

<svg style="left:0;top:0" width="1454" height="847">
<path d="M9.5 821.5 L28.5 821.5 L28.5 835.5 L21 835.5 L18.5 839 L16 835.5 L9.5 835.5 Z" fill="#5b6aa6" stroke="#e8ecf8" stroke-width="1.3" stroke-linejoin="round"/>
<path d="M998.4 823.5 L998.4 838.7 M993 829 L998.4 823.3 L1003.8 829" fill="none" stroke="#e8ecf8" stroke-width="1.4"/>
<path d="M1172.4 834.5 L1182.2 834.5 L1177.3 828.6 Z" fill="#e8ecf8"/>
<rect x="1210.5" y="827.5" width="17.5" height="12" fill="none" stroke="#e8ecf8" stroke-width="1.4"/>
<rect x="1210.5" y="824.2" width="17.5" height="3.3" fill="none" stroke="#e8ecf8" stroke-width="1.3"/>
<path d="M1216.5 827.5 L1216.5 834.5 L1219.2 832.5 L1222 834.5 L1222 827.5" fill="none" stroke="#e8ecf8" stroke-width="1.2"/>
<path d="M1358.2 834.5 L1368 834.5 L1363.1 828.6 Z" fill="#e8ecf8"/>
<path d="M1396 836 C1397.5 834 1397 831 1397 829 C1397 825.5 1399.5 823 1402.2 823 C1405 823 1407.5 825.5 1407.5 829 C1407.5 831 1407 834 1408.5 836 Z" fill="none" stroke="#e8ecf8" stroke-width="1.3" stroke-linejoin="round"/>
<circle cx="1412" cy="837.2" r="7.3" fill="#e11b1b"/>
<text x="1412" y="841.7" font-family="Liberation Sans" font-size="11.5" fill="#fff" text-anchor="middle">2</text>
<g fill="#c9c0b0"><circle cx="1449" cy="831" r="0.9"/><circle cx="1449" cy="834" r="0.9"/><circle cx="1449" cy="837" r="0.9"/><circle cx="1449" cy="840" r="0.9"/><circle cx="1446" cy="834" r="0.9"/><circle cx="1446" cy="837" r="0.9"/><circle cx="1446" cy="840" r="0.9"/><circle cx="1443" cy="837" r="0.9"/><circle cx="1443" cy="840" r="0.9"/><circle cx="1441" cy="840" r="0.9"/></g>
</svg>
<div class="t" style="left:38px;top:824px;color:#e8ecf8">This item does not support previewing</div>
<div class="t" style="left:1015px;top:824px;color:#e8ecf8">Add to Source Control</div>
<div class="t" style="left:1235px;top:824px;color:#e8ecf8">Select Repository</div>


</body></html>
